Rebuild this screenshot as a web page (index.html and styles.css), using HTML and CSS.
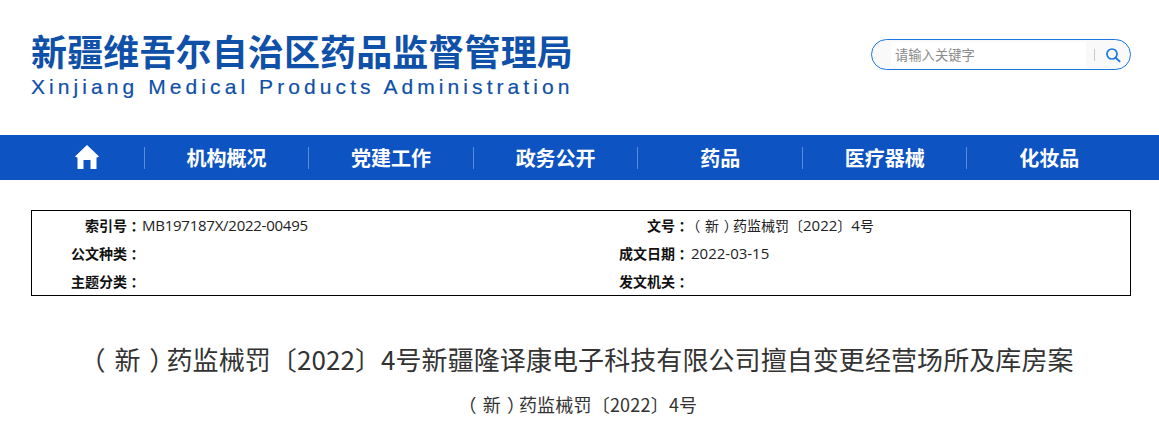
FILE: index.html
```html
<!DOCTYPE html>
<html lang="zh-CN">
<head>
<meta charset="utf-8">
<title>新疆维吾尔自治区药品监督管理局</title>
<link rel="stylesheet" href="styles.css">
</head>
<body>
<header class="header">
  <div class="brand">
    <div class="brand-cn">新疆维吾尔自治区药品监督管理局</div>
    <div class="brand-en">Xinjiang Medical Products Administration</div>
  </div>
  <form class="search">
    <div class="search-input">请输入关键字</div>
    <span class="search-sep"></span>
    <svg class="search-icon" viewBox="0 0 16 16" width="16" height="16"><circle cx="7" cy="7" r="5" fill="none" stroke="#1a78e6" stroke-width="1.7"/><path d="M10.7 10.7 L14.6 14.4" stroke="#1a78e6" stroke-width="1.9" stroke-linecap="round"/></svg>
  </form>
</header>
<nav class="nav">
  <div class="nav-inner">
    <a class="nav-home"><svg viewBox="0 0 24 24" width="24" height="24"><path fill="#fff" d="M12 0 L24 11.5 L22 12.5 L21.5 12.5 V24 H15.5 V15 H8.5 V24 H2.5 V12.5 H2 L0 11.5 Z"/></svg></a>
    <a class="nav-item">机构概况</a>
    <a class="nav-item">党建工作</a>
    <a class="nav-item">政务公开</a>
    <a class="nav-item">药品</a>
    <a class="nav-item">医疗器械</a>
    <a class="nav-item">化妆品</a>
  </div>
</nav>
<section class="meta">
  <div class="meta-label">索引号<span class="colon">：</span></div><div class="meta-value"><span class="num code">MB197187X/2022-00495</span></div>
  <div class="meta-label">文号<span class="colon">：</span></div><div class="meta-value"><span class="pl">（</span>新<span class="pr">）</span>药监械罚〔<span class="num">2022</span>〕<span class="num">4</span>号</div>
  <div class="meta-label">公文种类<span class="colon">：</span></div><div class="meta-value"></div>
  <div class="meta-label">成文日期<span class="colon">：</span></div><div class="meta-value"><span class="num">2022-03-15</span></div>
  <div class="meta-label">主题分类<span class="colon">：</span></div><div class="meta-value"></div>
  <div class="meta-label">发文机关<span class="colon">：</span></div><div class="meta-value"></div>
</section>
<h1 class="title"><span class="pl">（</span>新<span class="pr">）</span>药监械罚〔2022〕4号新疆隆译康电子科技有限公司擅自变更经营场所及库房案</h1>
<p class="subtitle"><span class="pl">（</span>新<span class="pr">）</span>药监械罚〔2022〕4号</p>
</body>
</html>
```
FILE: styles.css
```css
html, body {
  margin: 0;
  padding: 0;
  height: 421px;
  overflow: hidden;
  background: #fff;
  font-family: "Noto Sans CJK SC", "Liberation Sans", sans-serif;
  color: #333;
}
.header {
  display: flex;
  justify-content: space-between;
  align-items: flex-start;
  height: 135px;
  padding: 0 28px 0 31px;
  box-sizing: border-box;
}
.brand { padding-top: 27px; width: 545px; }
.brand-cn {
  font-size: 36px;
  line-height: 46px;
  font-weight: 700;
  letter-spacing: 0.13px;
  color: #0f50a8;
  white-space: nowrap;
}
.brand-en {
  font-family: "Liberation Sans", sans-serif;
  font-size: 21px;
  line-height: 24px;
  margin-top: 2px;
  letter-spacing: 4.08px;
  -webkit-text-stroke: 0.2px #0f50a8;
  color: #0f50a8;
  white-space: nowrap;
}
.search {
  margin-top: 39px;
  width: 260px;
  height: 31px;
  box-sizing: border-box;
  border: 1px solid #1a78e6;
  border-radius: 16px;
  background: #f9f9f9;
  display: flex;
  align-items: center;
  padding-left: 19px;
}
.search-input {
  width: 195px;
  height: 26px;
  background: #fff;
  font-size: 13.3px;
  line-height: 26px;
  padding-left: 4px;
  box-sizing: border-box;
  color: #8a8a8a;
}
.search-sep {
  width: 1px;
  height: 12px;
  background: #c8c8c8;
  margin: 0 10px 0 8px;
}
.search-icon { display: block; }
.nav {
  height: 45px;
  background: #0d53c1;
}
.nav-inner {
  margin-left: 31px;
  width: 1100px;
  height: 45px;
  display: grid;
  grid-template-columns: 112.8px repeat(6, 1fr);
  align-items: center;
}
.nav-home {
  display: flex;
  justify-content: center;
  padding: 0 1px 2px 0;
}
.nav-home svg { display: block; }
.nav-item {
  height: 22px;
  line-height: 22px;
  margin-top: 1px;
  border-left: 1px solid #5a8bd8;
  text-align: center;
  color: #fff;
  font-size: 20px;
  font-weight: 700;
}
.meta {
  margin: 30px 0 0 31px;
  width: 1100px;
  height: 86px;
  box-sizing: border-box;
  border: 1px solid #000;
  display: grid;
  grid-template-columns: 109px 446px 102px 1fr;
  grid-auto-rows: 28px;
  font-size: 14px;
  line-height: 28px;
}
.meta-label {
  font-weight: 700;
  color: #111;
  text-align: right;
  white-space: nowrap;
}
.colon {
  display: inline-block;
  width: 1em;
  text-align: center;
  font-feature-settings: "palt";
}
.meta-value {
  padding-left: 2px;
  white-space: nowrap;
  color: #222;
}
.num {
  font-family: "Open Sans", sans-serif;
  font-size: 15px;
}
.code {
  margin-left: -1px;
  letter-spacing: -0.25px;
}
.pl, .pr {
  display: inline-block;
  width: 1em;
  box-sizing: border-box;
  font-feature-settings: "palt";
}
.pl { text-align: left; padding-left: 0.12em; }
.pr { text-align: right; padding-right: 0.12em; }
.title {
  margin: 45px 0 0;
  padding-left: 3px;
  text-align: center;
  font-size: 26px;
  line-height: 36px;
  font-weight: 400;
  letter-spacing: 0.08px;
  color: #333;
}
.subtitle {
  margin: 15px 0 0;
  padding-left: 3px;
  text-align: center;
  font-size: 18px;
  line-height: 24px;
  letter-spacing: 0.2px;
  color: #333;
}
```
